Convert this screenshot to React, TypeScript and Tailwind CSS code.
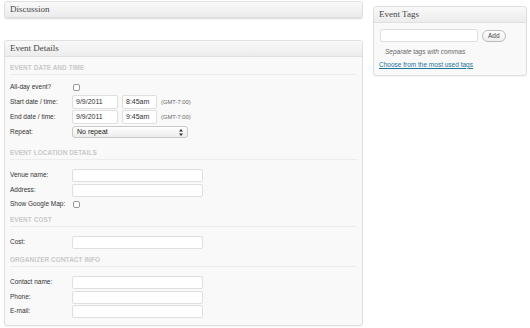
import type React from "react"

const sans = { fontFamily: '"Liberation Sans", Arial, sans-serif' }
const serif = { fontFamily: '"Liberation Serif", "DejaVu Serif", serif' }

function Box({ title, className, children }: { title: string; className?: string; children?: React.ReactNode }) {
  return (
    <div className={"border border-[#dfdfdf] rounded-[3px] bg-[#f9f9f9] shadow-[0_1px_1px_rgba(0,0,0,0.04)] " + (className ?? "")}>
      <div
        className="h-[16px] flex items-center px-[5px] bg-gradient-to-b from-[#f9f9f9] to-[#ececec] border-b border-[#dfdfdf] rounded-t-[3px] text-[9px] text-[#464646]"
        style={serif}
      >
        {title}
      </div>
      {children}
    </div>
  )
}

function Heading({ children, pt }: { children: string; pt: string }) {
  return (
    <div className={"border-b border-[#ececec] ml-[5px] mr-[5px] text-[6.4px] leading-[8px] font-bold tracking-[0.1px] text-[#c8c8c8] " + pt}>
      <div className="pb-[2px]">{children}</div>
    </div>
  )
}

function Field({ w }: { w: string }) {
  return <div className={"h-[13px] bg-white border border-[#dfdfdf] rounded-[2px] " + w} />
}

function Row({ label, mt, children }: { label: string; mt: string; children: React.ReactNode }) {
  return (
    <div className={"flex items-center h-[14px] pl-[5px] " + mt}>
      <div className="w-[62px] text-[6.5px] text-[#333]">{label}</div>
      <div className="flex items-center gap-[4px]">{children}</div>
    </div>
  )
}

function Check() {
  return <div className="w-[7px] h-[7px] ml-[1px] rounded-[2px] border border-[#999] bg-white" />
}

function Filled({ w, v }: { w: string; v: string }) {
  return (
    <div className={"h-[14px] bg-white border border-[#dfdfdf] rounded-[2px] flex items-center px-[3px] text-[7px] text-[#333] " + w}>
      {v}
    </div>
  )
}

export default function App() {
  return (
    <div className="w-[530px] h-[328px] bg-white flex gap-[10px] pl-[4px] overflow-hidden" style={sans}>
      <div className="w-[359px] flex flex-col gap-[21px] pt-[1px]">
        <Box title="Discussion" className="h-[18px] bg-gradient-to-b from-[#f9f9f9] to-[#ececec]" />
        <Box title="Event Details" className="pb-[7px]">
          <Heading pt="pt-[7px]">EVENT DATE AND TIME</Heading>
          <Row label="All-day event?" mt="mt-[5px]">
            <Check />
          </Row>
          <Row label="Start date / time:" mt="mt-[1px]">
            <Filled w="w-[46px]" v="9/9/2011" />
            <Filled w="w-[35px]" v="8:45am" />
            <span className="text-[5.8px] text-[#666]">(GMT-7:00)</span>
          </Row>
          <Row label="End date / time:" mt="mt-[1px]">
            <Filled w="w-[46px]" v="9/9/2011" />
            <Filled w="w-[35px]" v="9:45am" />
            <span className="text-[5.8px] text-[#666]">(GMT-7:00)</span>
          </Row>
          <Row label="Repeat:" mt="mt-[1px]">
            <div className="w-[116px] h-[12px] border border-[#c9c9c9] rounded-[3px] bg-gradient-to-b from-white to-[#ececec] flex items-center justify-between px-[4px] text-[7px] text-[#222]">
              <span>No repeat</span>
              <svg width="4" height="7" viewBox="0 0 4 7">
                <path d="M2 0 L4 2.5 L0 2.5 Z M2 7 L4 4.5 L0 4.5 Z" fill="#333" />
              </svg>
            </div>
          </Row>
          <Heading pt="pt-[10px]">EVENT LOCATION DETAILS</Heading>
          <Row label="Venue name:" mt="mt-[8px]">
            <Field w="w-[131px]" />
          </Row>
          <Row label="Address:" mt="mt-[1px]">
            <Field w="w-[131px]" />
          </Row>
          <Row label="Show Google Map:" mt="mt-0">
            <Check />
          </Row>
          <Heading pt="pt-[5px]">EVENT COST</Heading>
          <Row label="Cost:" mt="mt-[8px]">
            <Field w="w-[131px]" />
          </Row>
          <Heading pt="pt-[7px]">ORGANIZER CONTACT INFO</Heading>
          <Row label="Contact name:" mt="mt-[8px]">
            <Field w="w-[131px]" />
          </Row>
          <Row label="Phone:" mt="mt-[1px]">
            <Field w="w-[131px]" />
          </Row>
          <Row label="E-mail:" mt="mt-0">
            <Field w="w-[131px]" />
          </Row>
        </Box>
      </div>
      <div className="w-[154px] pt-[6px]">
        <Box title="Event Tags" className="pb-[5px]">
          <div className="flex items-center gap-[4px] pl-[6px] mt-[6px]">
            <div className="w-[98px] h-[13px] bg-white border border-[#dfdfdf] rounded-[2px]" />
            <div className="h-[12px] px-[5px] rounded-full border border-[#bbb] bg-gradient-to-b from-white to-[#ededed] flex items-center text-[6.5px] text-[#464646]">
              Add
            </div>
          </div>
          <div className="pl-[11px] mt-[5px] text-[6.5px] italic text-[#666]">Separate tags with commas</div>
          <div className="pl-[5px] mt-[3px] text-[6.5px] text-[#21759b] underline">Choose from the most used tags</div>
        </Box>
      </div>
    </div>
  )
}
